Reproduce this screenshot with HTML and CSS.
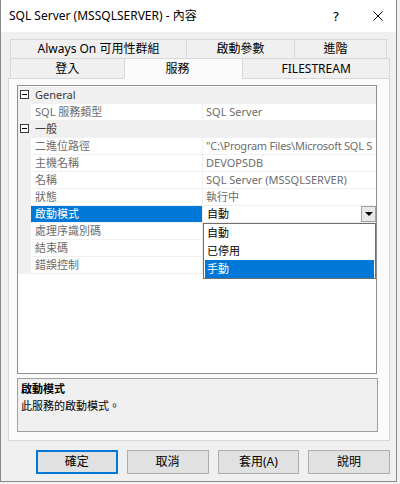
FILE: index.html
```html
<!DOCTYPE html>
<html lang="zh-Hant">
<head>
<meta charset="utf-8">
<title>SQL Server (MSSQLSERVER) - 內容</title>
<link rel="stylesheet" href="styles.css">
</head>
<body>
<div class="window">
  <div class="titlebar">
    <span class="title">SQL Server (MSSQLSERVER) - 內容</span>
    <span class="help">?</span>
    <svg class="close" width="10" height="10" viewBox="0 0 10 10"><path d="M0.5 0.5L9.5 9.5M9.5 0.5L0.5 9.5" stroke="#000" stroke-width="1" fill="none"/></svg>
  </div>
  <div class="content">
    <div class="tabs">
      <div class="tabrow">
        <div class="tab t-ao">Always On 可用性群組</div>
        <div class="tab t-sp">啟動參數</div>
        <div class="tab t-adv">進階</div>
      </div>
      <div class="tabrow front">
        <div class="tab t-login">登入</div>
        <div class="tab t-svc sel">服務</div>
        <div class="tab t-fs">FILESTREAM</div>
      </div>
    </div>
    <div class="panel">
      <div class="grid">
        <div class="row cat"><div class="m"><span class="toggle"></span></div><div class="catname">General</div></div>
        <div class="row"><div class="m"></div><div class="name">SQL 服務類型</div><div class="val">SQL Server</div></div>
        <div class="row cat"><div class="m"><span class="toggle"></span></div><div class="catname">一般</div></div>
        <div class="row"><div class="m"></div><div class="name">二進位路徑</div><div class="val path">"C:\Program Files\Microsoft SQL S</div></div>
        <div class="row"><div class="m"></div><div class="name">主機名稱</div><div class="val">DEVOPSDB</div></div>
        <div class="row"><div class="m"></div><div class="name">名稱</div><div class="val">SQL Server (MSSQLSERVER)</div></div>
        <div class="row"><div class="m"></div><div class="name">狀態</div><div class="val">執行中</div></div>
        <div class="row"><div class="m"></div><div class="name sel">啟動模式</div><div class="val combo"><span class="ctext">自動</span><span class="cbtn"><span class="tri"></span></span></div></div>
        <div class="row"><div class="m"></div><div class="name">處理序識別碼</div><div class="val"></div></div>
        <div class="row"><div class="m"></div><div class="name">結束碼</div><div class="val"></div></div>
        <div class="row"><div class="m"></div><div class="name">錯誤控制</div><div class="val"></div></div>
        <div class="dropdown">
          <div class="item">自動</div>
          <div class="item">已停用</div>
          <div class="item sel">手動</div>
        </div>
      </div>
      <div class="desc">
        <div class="dt">啟動模式</div>
        <div class="dd">此服務的啟動模式。</div>
      </div>
    </div>
    <div class="buttons">
      <div class="btn default">確定</div>
      <div class="btn">取消</div>
      <div class="btn">套用(A)</div>
      <div class="btn">說明</div>
    </div>
  </div>
</div>
</body>
</html>
```

FILE: styles.css
```css
* { box-sizing: border-box; }
html, body { margin: 0; padding: 0; }
body {
  background: #f0f0f0;
  font-family: "Noto Sans", "Noto Sans CJK TC", sans-serif;
  font-size: 12px;
  line-height: 1;
  color: #000;
}
.window {
  width: 397px;
  height: 482px;
  border: 1px solid #8a8a8a;
  border-top: none;
  background: #f0f0f0;
  display: flex;
  flex-direction: column;
}
.titlebar {
  height: 32px;
  flex: none;
  background: #fff;
  display: flex;
  align-items: center;
  padding-left: 8px;
}
.title { flex: 1; white-space: nowrap; }
.help {
  width: 20px;
  text-align: center;
  margin-right: 27px;
  font-family: "DejaVu Sans", sans-serif;
  font-size: 13px;
}
.close { margin-right: 13px; display: block; }
.content {
  flex: 1;
  padding: 7px 6px 0 7px;
  display: flex;
  flex-direction: column;
}
.tabs { margin-left: 2px; position: relative; z-index: 2; }
.tabrow { display: flex; }
.tabrow.front { margin-top: -1px; }
.tab {
  height: 20px;
  border: 1px solid #d9d9d9;
  margin-left: -1px;
  background: #f0f0f0;
  text-align: center;
  line-height: 18px;
  white-space: nowrap;
}
.tab:first-child { margin-left: 0; }
.tabrow.front .tab { height: 21px; line-height: 19px; }
.t-ao { width: 177px; }
.t-sp { width: 109px; }
.t-adv { width: 93px; padding-right: 10px; }
.t-login { width: 115px; }
.t-svc { width: 120px; padding-right: 12px; }
.t-fs { width: 148px; }
.tab.sel {
  background: #fbfbfb;
  border-bottom-color: #fbfbfb;
}
.panel {
  width: 382px;
  height: 363px;
  margin-top: -1px;
  border: 1px solid #d9d9d9;
  background: #fbfbfb;
  padding: 6px 8px 8px 8px;
  display: flex;
  flex-direction: column;
}
.grid {
  position: relative;
  width: 360px;
  height: 289px;
  border: 1px solid #8e8f8f;
  background: #fff;
  padding-top: 1px;
  flex: none;
  font-size: 11px;
}
.row {
  display: flex;
  height: 17px;
  border-bottom: 1px solid #f0f0f0;
}
.m { width: 13px; flex: none; background: #f0f0f0; }
.name {
  width: 172px;
  flex: none;
  padding-left: 4px;
  border-right: 1px solid #f0f0f0;
  color: #6d6d6d;
  line-height: 16px;
  white-space: nowrap;
}
.name.sel { background: #0078d7; color: #fff; }
.val {
  flex: 1;
  padding-left: 3px;
  color: #6d6d6d;
  line-height: 16px;
  white-space: nowrap;
  overflow: hidden;
}
.val.path { letter-spacing: -0.25px; }
.row.cat { background: #f0f0f0; }
.catname { padding-left: 4px; line-height: 16px; color: #3c3c3c; }
.toggle {
  display: block;
  position: relative;
  width: 9px;
  height: 9px;
  margin: 3px 0 0 2px;
  border: 1px solid #3c3c3c;
  background: #fff;
}
.toggle::after {
  content: "";
  position: absolute;
  left: 1px;
  top: 3px;
  width: 5px;
  height: 1px;
  background: #000;
}
.combo {
  display: flex;
  justify-content: space-between;
  color: #000;
  padding-left: 4px;
}
.cbtn {
  width: 15px;
  height: 16px;
  border: 1px solid #a0a0a0;
  background: #e8e8e8;
  display: flex;
  align-items: center;
  justify-content: center;
}
.tri {
  width: 0;
  height: 0;
  border-left: 4px solid transparent;
  border-right: 4px solid transparent;
  border-top: 4px solid #000;
}
.dropdown {
  position: absolute;
  left: 185px;
  top: 137px;
  width: 173px;
  height: 56px;
  border: 1px solid #6e6e6e;
  background: #fff;
}
.item {
  height: 18px;
  line-height: 18px;
  padding-left: 3px;
}
.item.sel { background: #0078d7; color: #fff; margin: 0 1px; padding-left: 2px; }
.desc {
  margin-top: 4px;
  width: 361px;
  height: 54px;
  border: 1px solid #a0a0a0;
  background: #f0f0f0;
  padding: 1px 3px;
  flex: none;
  font-size: 11px;
}
.dt { font-weight: bold; line-height: 17px; }
.dd { line-height: 17px; }
.buttons {
  display: flex;
  gap: 9px;
  margin-top: 9px;
  margin-left: 28px;
}
.btn {
  width: 82px;
  height: 24px;
  border: 1px solid #adadad;
  background: #e1e1e1;
  text-align: center;
  line-height: 22px;
}
.btn.default { border: 2px solid #0078d7; line-height: 20px; }
```
